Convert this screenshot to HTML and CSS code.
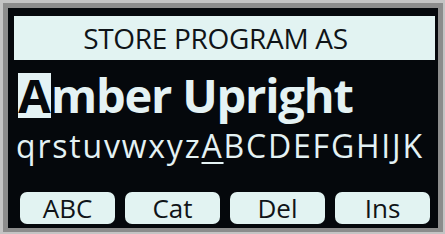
FILE: index.html
```html
<!DOCTYPE html>
<html>
<head>
<title>Store program as</title>
<link rel="stylesheet" href="styles.css">
</head>
<body>
<div class="frame">
<div class="screen">
<div class="title">STORE PROGRAM AS</div>
<div class="name"><span class="cursor">A</span>mber Upright</div>
<div class="chars">qrstuvwxyz<span class="sel">A</span>BCDEFGHIJK</div>
<div class="keys">
<div class="key">ABC</div>
<div class="key">Cat</div>
<div class="key">Del</div>
<div class="key">Ins</div>
</div>
</div>
</div>
</body>
</html>
```

FILE: styles.css
```css
/* LCD screen: store program dialog */

body
{ margin: 0;
background-color: #c4c4c4;
font-family: "Open Sans", "Liberation Sans", sans-serif;
}

div.frame
{ width: 445px;
height: 234px;
box-sizing: border-box;
padding: 3px 2px 2px 3px;
background-color: #c4c4c4;
}

div.screen
{ height: 100%;
box-sizing: border-box;
border: 5px solid #8c8c8c;
border-bottom-width: 4px;
background-color: #05080c;
padding: 8px 3px 0 6px;
display: flex;
flex-direction: column;
}

div.title
{ height: 44px;
flex-shrink: 0;
padding-right: 18px;
background-color: #e2f3f2;
color: #101418;
font-size: 28px;
letter-spacing: -0.3px;
line-height: 44px;
text-align: center;
}

div.name
{ margin-top: 13px;
margin-left: 4px;
color: #e4f2f4;
font-size: 47px;
font-weight: bold;
letter-spacing: -1.2px;
line-height: 45px;
height: 45px;
white-space: nowrap;
}

span.cursor
{ background-color: #e4f2f4;
color: #05080c;
display: inline-block;
width: 33px;
text-align: center;
letter-spacing: 0;
}

div.chars
{ margin-top: 11px;
margin-left: 2px;
color: #e4f2f4;
font-size: 32px;
letter-spacing: 1.8px;
line-height: 34px;
white-space: nowrap;
}

span.sel
{ text-decoration: underline;
text-underline-offset: 4px;
text-decoration-thickness: 2px;
}

div.keys
{ margin-top: auto;
margin-bottom: 4px;
margin-left: 6px;
display: flex;
gap: 10px;
}

div.key
{ width: 95px;
height: 32px;
border-radius: 7px;
background-color: #e2f3f2;
color: #101418;
font-size: 26px;
line-height: 32px;
text-align: center;
}
```
